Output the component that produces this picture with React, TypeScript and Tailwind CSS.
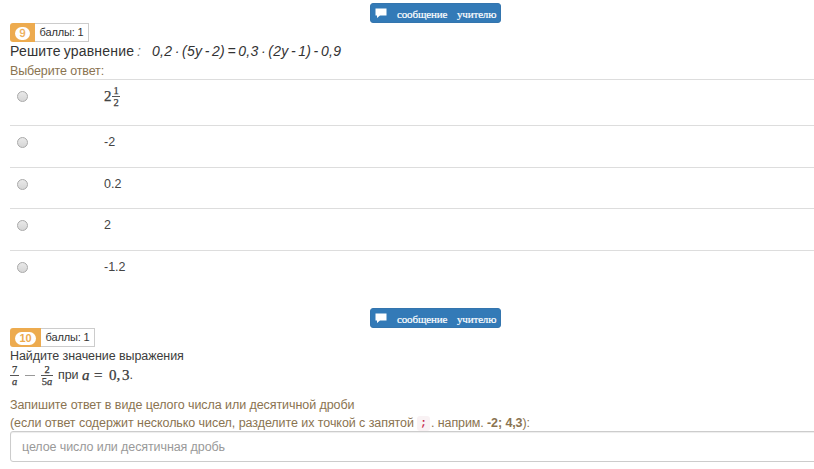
import React from "react";

const sans = "font-['Liberation_Sans',Arial,sans-serif]";
const math =
  "font-['Liberation_Serif','Times_New_Roman',serif] [-webkit-text-stroke:0.25px_#333]";

function MessageButton() {
  return (
    <button className="ml-[370px] flex h-[20px] w-[131px] items-center rounded-[3px] border border-[#3475ae] bg-[#337ab7] pl-[4px] font-['Liberation_Serif','Times_New_Roman',serif] text-[11px] leading-[18px] tracking-[-0.15px] text-white [-webkit-text-stroke:0.2px_white]">
      <svg width="12" height="12" viewBox="0 0 12 12" className="mb-[1px] shrink-0">
        <path d="M0.5 1.5h11v7H5L2 11V8.500h-1.500z" fill="white" />
      </svg>
      <span className="ml-[10px] mt-[2px] w-[50px] whitespace-nowrap text-left">сообщение</span>
      <span className="ml-[10px] mt-[2px] whitespace-nowrap">учителю</span>
    </button>
  );
}

function TaskBadge({ number, wide }: { number: string; wide?: boolean }) {
  return (
    <div className="flex h-[19px] items-stretch">
      <div
        className={`flex items-center justify-center rounded-l-[3px] bg-[#edab4f] pt-px ${wide ? "w-[31px]" : "w-[25px]"}`}
      >
        <span
          className={`flex h-[13px] items-center justify-center rounded-full bg-white pt-px text-[11px] leading-[11px] text-[#edab4f] ${wide ? "w-[21px] font-bold" : "w-[15px] [-webkit-text-stroke:0.3px_#edab4f]"}`}
        >
          {number}
        </span>
      </div>
      <div className="flex w-[54px] items-center justify-center border border-l-0 border-[#ccc] text-[11px] tracking-[-0.15px] whitespace-nowrap text-[#333]">
        баллы: 1
      </div>
    </div>
  );
}

function Fraction({ top, bottom, width }: { top: React.ReactNode; bottom: React.ReactNode; width: string }) {
  return (
    <span className={`inline-flex flex-col items-center text-[10.5px] leading-[9px] ${math} ${width}`}>
      <span className="h-[10px]">{top}</span>
      <span className="h-px w-full bg-[#555]" />
      <span className="h-[10px] pt-px">{bottom}</span>
    </span>
  );
}

function Answer({ children, height }: { children: React.ReactNode; height: string }) {
  return (
    <label className={`flex items-start border-t border-[#ddd] ${height}`}>
      <span className="mt-[11px] ml-[7px] size-[11px] shrink-0 rounded-full border border-[#a9a9a9] bg-gradient-to-b from-[#e9e9e9] to-[#d6d6d6]" />
      <span className="mt-[8px] ml-[76px] flex h-[17px] items-center text-[12.5px] text-[#444]">{children}</span>
    </label>
  );
}

export default function App() {
  return (
    <div className={`h-[469px] w-[814px] overflow-hidden bg-white pt-[3px] text-[#3c3c3c] ${sans}`}>
      <section className="h-[305px]">
        <MessageButton />
        <div className="pl-[10px]">
          <TaskBadge number="9" />
          <div className="flex h-[20px] items-center pb-[2px] text-[14px] whitespace-pre text-[#333]">
            <span className="w-[142px] tracking-[0.2px] [word-spacing:-1.2px]">Решите уравнение<span className="text-[#777] italic"> :</span></span>
            <span className="tracking-[0.3px] italic [word-spacing:-1.85px]">0,2 · (5y - 2) = 0,3 · (2y - 1) - 0,9</span>
          </div>
          <div className="h-[17px] text-[12.5px] leading-[18px] tracking-[-0.12px] text-[#8a7350]">Выберите ответ:</div>
          <Answer height="h-[46px]">
            <span className={`w-[8px] text-[15px] ${math}`}>2</span>
            <Fraction top="1" bottom="2" width="w-[8px]" />
          </Answer>
          <Answer height="h-[42px]">-2</Answer>
          <Answer height="h-[41px]">0.2</Answer>
          <Answer height="h-[42px]">2</Answer>
          <Answer height="h-[42px]">-1.2</Answer>
        </div>
      </section>
      <section>
        <MessageButton />
        <div className="pl-[10px]">
          <TaskBadge number="10" wide />
          <div className="h-[17px] text-[12.5px] leading-[18px] tracking-[-0.08px] whitespace-nowrap">Найдите значение выражения</div>
          <div className="flex h-[23px] items-center text-[12.5px] whitespace-pre">
            <Fraction top="7" bottom={<i>a</i>} width="w-[9px]" />
            <span className="w-[22px] px-[6px]">
              <span className="block h-px w-[10px] bg-[#999]" />
            </span>
            <Fraction top="2" bottom={<>5<i>a</i></>} width="w-[12px]" />
            <span className="ml-[5px] w-[24px] tracking-[-0.1px]">при</span>
            <span className={`flex text-[15px] ${math}`}>
              <i className="w-[12px]">a</i>
              <span className="w-[15px]">=</span>
              <span className="w-[13px]">0,</span>
              <span>3</span>
            </span>
            <span>.</span>
          </div>
          <div className="mt-[9px] text-[12.5px] leading-[18px] tracking-[-0.07px] whitespace-nowrap text-[#8a7350]">
            <div>Запишите ответ в виде целого числа или десятичной дроби</div>
            <div className="flex h-[17px] whitespace-pre">
              <span className="w-[403px]">(если ответ содержит несколько чисел, разделите их точкой с запятой</span>
              <code className="mt-[2px] ml-[4px] h-[15px] w-[13px] rounded-[3px] bg-[#f9f2f4] text-center font-['Liberation_Mono',monospace] text-[11px] leading-[15px] font-bold text-[#c7254e]">;</code>
              <span className="ml-px tracking-[-0.1px]">. наприм. <b>-2; 4,3</b>):</span>
            </div>
          </div>
          <input
            className="block h-[31px] w-[820px] rounded-[3px] border border-[#ccc] px-[11px] text-[12.5px] tracking-[-0.1px] shadow-[inset_0_1px_1px_rgba(0,0,0,0.075)] outline-none placeholder:text-[#999] placeholder:opacity-100"
            placeholder="целое число или десятичная дробь"
          />
        </div>
      </section>
    </div>
  );
}
